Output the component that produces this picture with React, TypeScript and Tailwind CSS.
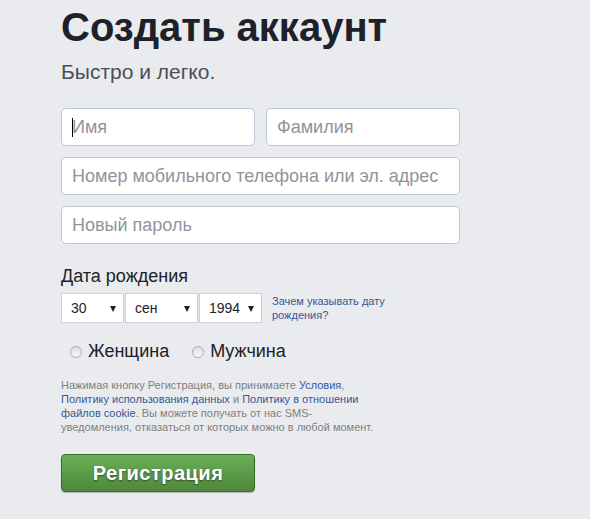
import React from "react";

const font = { fontFamily: '"Liberation Sans", Arial, Helvetica, sans-serif' };

function Select({ value, w }: { value: string; w: string }) {
  return (
    <div className={`relative flex h-[30px] items-center border border-[#ccd0d5] bg-white pl-[9px] text-[14px] text-[#1d2129] ${w}`}>
      <span>{value}</span>
      <svg className="absolute right-[7px] top-[12px]" width="6" height="6" viewBox="0 0 6 6">
        <path d="M0 0 L6 0 L3 6 Z" fill="#1d2129" />
      </svg>
    </div>
  );
}

function Radio({ label }: { label: string }) {
  return (
    <label className="flex items-center">
      <span className="mr-[6px] inline-block h-[12px] w-[12px] rounded-full border border-[#a8acb3] bg-gradient-to-b from-[#dcdfe3] to-[#f7f8f9]" />
      <span className="text-[18px] text-[#1d2129]">{label}</span>
    </label>
  );
}

export default function App() {
  const input =
    "h-[38px] rounded-[5px] border border-[#bdc7d8] bg-white px-[10px] text-[18px] text-[#1d2129] outline-none placeholder:text-[#90949c]";
  return (
    <div className="min-h-[519px] w-[590px] bg-[#e9ebee] pl-[61px] pt-[3px]" style={font}>
      <h1 className="text-[40px] font-bold leading-[48px] text-[#1d2129]">Создать аккаунт</h1>
      <div className="mt-[8px] text-[21px] leading-[26px] text-[#4b4f56]">Быстро и легко.</div>

      <div className="mt-[23px] flex w-[399px] flex-col gap-[11px]">
        <div className="flex gap-[11px]">
          <div className="relative">
            <input className={`${input} w-[194px]`} placeholder="Имя" />
            <span className="absolute left-[11px] top-[10px] h-[19px] w-[1px] bg-black" />
          </div>
          <input className={`${input} w-[194px]`} placeholder="Фамилия" />
        </div>
        <input className={`${input} w-[399px]`} placeholder="Номер мобильного телефона или эл. адрес" />
        <input className={`${input} w-[399px]`} placeholder="Новый пароль" />
      </div>

      <div className="mt-[21px] text-[18px] leading-[22px] text-[#1d2129]">Дата рождения</div>
      <div className="mt-[6px] flex items-center">
        <div className="flex gap-[1px]">
          <Select value="30" w="w-[63px]" />
          <Select value="сен" w="w-[73px]" />
          <Select value="1994" w="w-[63px]" />
        </div>
        <a className="ml-[10px] w-[130px] text-[11px] leading-[14px] text-[#365899]">
          Зачем указывать дату рождения?
        </a>
      </div>

      <div className="mt-[15px] flex gap-[23px] pl-[9px]">
        <Radio label="Женщина" />
        <Radio label="Мужчина" />
      </div>

      <p className="mt-[13px] text-[11px] leading-[14px] text-[#7f7f7f]">
        Нажимая кнопку Регистрация, вы принимаете <span className="text-[#365899]">Условия</span>,
        <br />
        <span className="text-[#365899]">Политику использования данных</span> и{" "}
        <span className="text-[#365899]">Политику в отношении</span>
        <br />
        <span className="text-[#365899]">файлов cookie</span>. Вы можете получать от нас SMS-
        <br />
        уведомления, отказаться от которых можно в любой момент.
      </p>

      <button
        className="mt-[20px] flex h-[38px] w-[194px] items-center justify-center rounded-[4px] border border-[#3b6e22] bg-gradient-to-b from-[#69b159] to-[#4f873c] text-[20px] font-bold tracking-[0.5px] text-white shadow-[0_1px_1px_rgba(0,0,0,0.25)] [text-shadow:0_1px_2px_rgba(0,0,0,0.5)]"
      >
        Регистрация
      </button>
    </div>
  );
}
